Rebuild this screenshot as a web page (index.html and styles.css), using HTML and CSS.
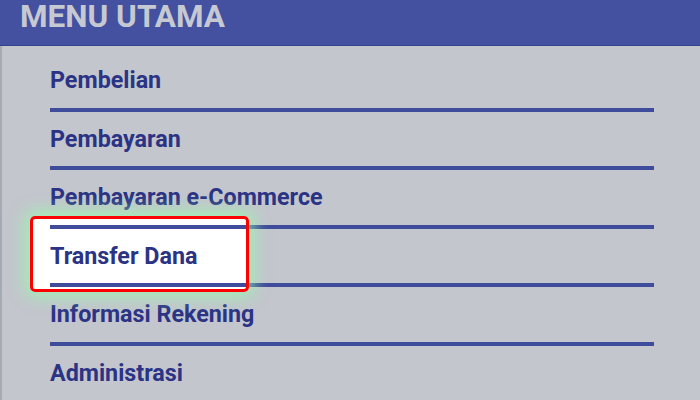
FILE: index.html
```html
<!DOCTYPE html>
<html lang="id">
<head>
<meta charset="utf-8">
<title>Menu Utama</title>
<link rel="stylesheet" href="styles.css">
</head>
<body>
<header class="header">MENU UTAMA</header>
<main class="menu">
  <div class="hl-fill"></div>
  <ul class="list">
    <li class="item"><span class="label">Pembelian</span></li>
    <li class="item"><span class="label">Pembayaran</span></li>
    <li class="item"><span class="label">Pembayaran e-Commerce</span></li>
    <li class="item"><span class="label">Transfer Dana</span></li>
    <li class="item"><span class="label">Informasi Rekening</span></li>
    <li class="item"><span class="label">Administrasi</span></li>
  </ul>
  <div class="hl-frame"></div>
</main>
</body>
</html>
```
FILE: styles.css
```css
html, body {
  margin: 0;
  padding: 0;
}
body {
  width: 700px;
  height: 400px;
  overflow: hidden;
  background: #c3c6cd;
  font-family: Roboto, "Liberation Sans", Arial, sans-serif;
}
.header {
  box-sizing: border-box;
  background: #4351a0;
  border-bottom: 1px solid #36428c;
  height: 46px;
  padding: 1px 0 0 20px;
  color: #c6c9d1;
  font-size: 31.5px;
  font-weight: 700;
  line-height: 32px;
}
.menu {
  position: relative;
  border-left: 2px solid #a6aab2;
  height: 354px;
  box-sizing: border-box;
  padding-top: 7.2px;
}
.list {
  list-style: none;
  margin: 0;
  padding: 0 45.7px 0 48px;
  position: relative;
  z-index: 1;
}
.item {
  height: 58.5px;
  box-sizing: border-box;
  border-bottom: 4px solid #3f4b9b;
}
.item:last-child {
  border-bottom: none;
}
.label {
  display: block;
  line-height: 54.5px;
  font-size: 23.3px;
  font-weight: 700;
  color: #2b3385;
}
.hl-fill {
  position: absolute;
  left: 28px;
  top: 170px;
  width: 219px;
  height: 76px;
  background: #ffffff;
  border-radius: 5px;
  z-index: 0;
}
.hl-frame {
  position: absolute;
  left: 28px;
  top: 170px;
  width: 219px;
  height: 76px;
  box-sizing: border-box;
  border: 3.5px solid #ff0000;
  border-radius: 5px;
  box-shadow: 0 0 16px 5px rgba(150, 255, 170, 0.7);
  z-index: 2;
}
```
